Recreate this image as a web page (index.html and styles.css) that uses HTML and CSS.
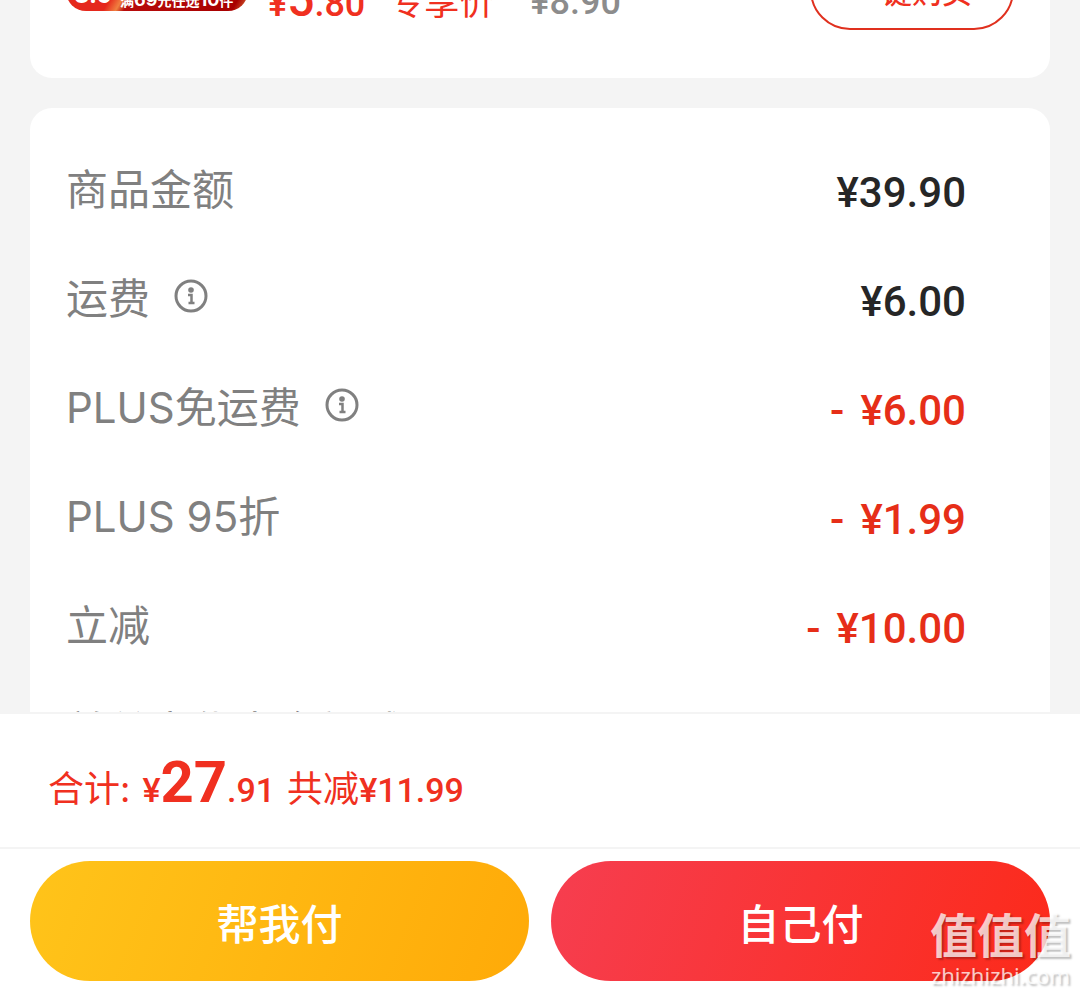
FILE: index.html
```html
<!DOCTYPE html>
<html lang="zh-CN">
<head>
    <meta charset="UTF-8">
    <meta name="viewport" content="width=device-width, initial-scale=1.0">
    <title>确认订单</title>
    <link rel="stylesheet" href="styles.css">
</head>
<body>
    <main class="content">
        <section class="card product">
            <div class="promo">
                <div class="promo-price">3.9</div>
                <div class="promo-text">满<span class="promo-number">69</span>元任选<span class="promo-number">10</span>件</div>
            </div>
            <div class="price"><span class="small">¥</span>5<span class="small">.80</span></div>
            <div class="price-tag">专享价</div>
            <div class="old-price">¥8.90</div>
            <button class="buy-button">一键购买</button>
        </section>

        <section class="card summary">
            <div class="row">
                <span class="label">商品金额</span>
                <span class="amount">¥39.90</span>
            </div>
            <div class="row">
                <span class="label">运费</span>
                <button class="info" aria-label="运费说明">
                    <svg viewBox="0 0 34 34" width="34" height="34">
                        <circle cx="17" cy="17" r="15" fill="none" stroke="currentColor" stroke-width="3"/>
                        <circle cx="17" cy="11" r="2.8" fill="currentColor"/>
                        <path d="M14 16h3.5v8M14.5 24h6" fill="none" stroke="currentColor" stroke-width="2.5"/>
                    </svg>
                </button>
                <span class="amount">¥6.00</span>
            </div>
            <div class="row">
                <span class="label">PLUS免运费</span>
                <button class="info" aria-label="PLUS免运费说明">
                    <svg viewBox="0 0 34 34" width="34" height="34">
                        <circle cx="17" cy="17" r="15" fill="none" stroke="currentColor" stroke-width="3"/>
                        <circle cx="17" cy="11" r="2.8" fill="currentColor"/>
                        <path d="M14 16h3.5v8M14.5 24h6" fill="none" stroke="currentColor" stroke-width="2.5"/>
                    </svg>
                </button>
                <span class="amount discount"><span class="minus">-</span>¥6.00</span>
            </div>
            <div class="row">
                <span class="label">PLUS 95折</span>
                <span class="amount discount"><span class="minus">-</span>¥1.99</span>
            </div>
            <div class="row">
                <span class="label">立减</span>
                <span class="amount discount"><span class="minus">-</span>¥10.00</span>
            </div>
            <div class="row note">
                <span class="label">首单享优惠金额减</span>
            </div>
        </section>
    </main>

    <footer class="footer">
        <div class="total">
            <span>合计:</span>
            <span class="total-price">¥<span class="big">27</span>.91</span>
            <span>共减<span class="saved">¥11.99</span></span>
        </div>
        <div class="actions">
            <button class="pay friend">帮我付</button>
            <button class="pay self">自己付</button>
        </div>
    </footer>

    <div class="watermark">
        <div class="watermark-name">值值值</div>
        <div class="watermark-site">zhizhizhi.com</div>
    </div>
</body>
</html>
```
FILE: styles.css
```css
* {
    box-sizing: border-box;
}

body {
    display: flex;
    flex-direction: column;
    height: 100vh;
    margin: 0;
    position: relative;
    overflow: hidden;
    background-color: #f4f4f4;
    font-family: Inter, "Noto Sans CJK SC", sans-serif;
}

button {
    border: none;
    padding: 0;
    background: none;
    font-family: inherit;
    cursor: pointer;
}

.content {
    flex: 1;
    min-height: 0;
    overflow: hidden;
    padding: 0 30px;
}

.card {
    background-color: #ffffff;
    border-radius: 22px;
}

/* product card, scrolled up so only its bottom shows */
.product {
    display: flex;
    align-items: flex-end;
    height: 78px;
    margin-bottom: 30px;
    padding: 0 36px 48px;
    overflow: hidden;
    border-top-left-radius: 0;
    border-top-right-radius: 0;
}

.promo {
    display: flex;
    align-items: flex-end;
    width: 182px;
    height: 44px;
    margin-bottom: 19px;
    border-radius: 20px;
    overflow: hidden;
    background: linear-gradient(120deg, #e5281c 30%, #f08040 36%, #b80c0c 40%, #a80000 92%, #e08040);
    color: #ffffff;
    font-weight: 700;
}

.promo-price {
    width: 54px;
    padding-left: 8px;
    font-size: 24px;
    line-height: 32px;
}

.promo-text {
    font-size: 14px;
    line-height: 20px;
    white-space: nowrap;
}

.promo-number {
    font-size: 18px;
}

.price {
    margin-left: 20px;
    color: #f03020;
    font: 500 48px/52px Roboto, sans-serif;
}

.small {
    font-size: 36px;
}

.price-tag {
    margin-left: 24px;
    color: #f03020;
    font-size: 35px;
    line-height: 56px;
}

.old-price {
    margin-left: 36px;
    color: #8c8c8c;
    font: 500 36px/56px Roboto, sans-serif;
}

.buy-button {
    flex: none;
    width: 204px;
    height: 80px;
    margin-left: auto;
    border: 2px solid #e0301e;
    border-radius: 40px;
    color: #f03020;
    font-size: 30px;
    font-weight: 500;
}

.summary {
    padding: 26px 84px 0 36px;
}

.row {
    display: flex;
    align-items: center;
    height: 109px;
}

.note {
    height: 103px;
}

.label {
    padding-top: 2px;
    color: #808080;
    font-size: 42px;
    line-height: 60px;
}

.info {
    width: 34px;
    height: 34px;
    margin: 0 0 4px 24px;
    color: #808080;
}

.info svg {
    display: block;
}

.amount {
    margin-left: auto;
    padding-top: 8px;
    color: #262626;
    font: 500 42px/48px Roboto, sans-serif;
}

.discount {
    color: #e62e18;
}

.minus {
    margin-right: 16px;
}

.footer {
    background-color: #ffffff;
    border-top: 2px solid #f4f4f4;
}

.total {
    display: flex;
    align-items: baseline;
    gap: 12px;
    height: 135px;
    padding: 32px 48px 0;
    border-bottom: 2px solid #f4f4f4;
    color: #f03020;
    font-size: 36px;
}

.total-price {
    font: 500 34px/72px Roboto, sans-serif;
}

.big {
    font-size: 58px;
    font-weight: 700;
}

.saved {
    font-family: Roboto, sans-serif;
    font-size: 34px;
    font-weight: 500;
}

.actions {
    display: flex;
    gap: 22px;
    padding: 12px 30px;
}

.pay {
    flex: 1;
    height: 120px;
    border-radius: 60px;
    color: #ffffff;
    font-size: 42px;
    font-weight: 500;
}

.friend {
    background: linear-gradient(110deg, #ffc41a, #ffaa08);
}

.self {
    background: linear-gradient(110deg, #f63e50, #fc2a1a);
}

.watermark {
    position: absolute;
    right: 9px;
    bottom: 4px;
    color: rgba(255, 255, 255, 0.75);
    text-align: center;
    text-shadow: 2px 2px 2px rgba(0, 0, 0, 0.25);
    pointer-events: none;
}

.watermark-name {
    font-size: 47px;
    font-weight: 700;
    line-height: 50px;
}

.watermark-site {
    font: 22px/28px "Noto Sans", sans-serif;
}
```
